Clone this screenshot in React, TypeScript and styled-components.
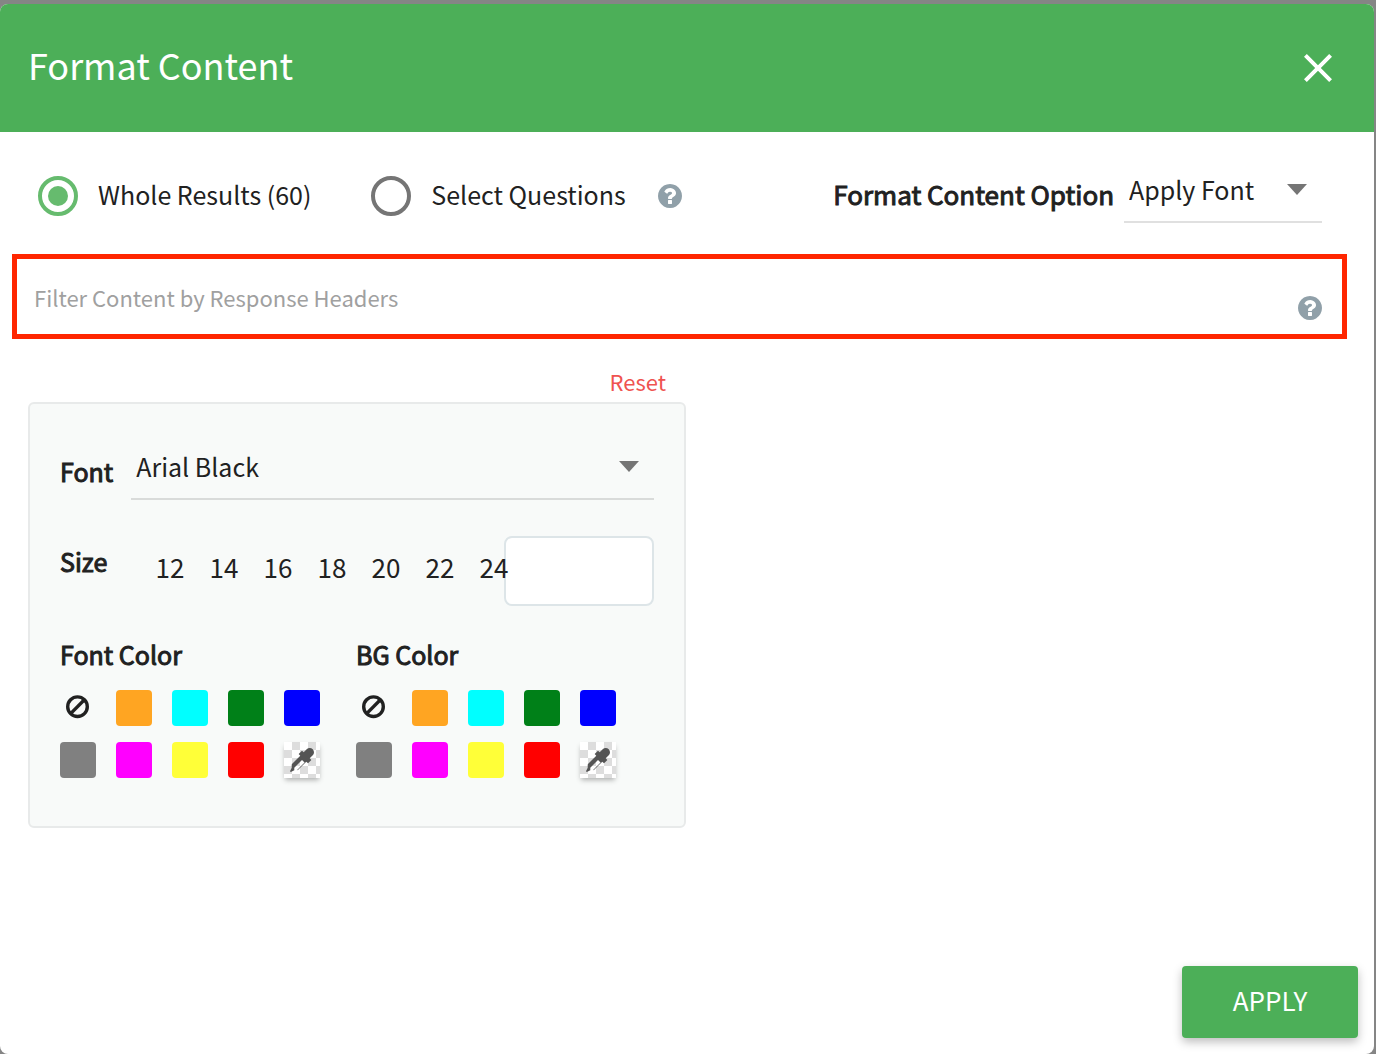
import React, { useState } from "react";
import styled, { createGlobalStyle } from "styled-components";
import { MdClose } from "react-icons/md";

const ink = "#212121";
const green = "#4caf58";

const GlobalStyle = createGlobalStyle`
  *, *::before, *::after { box-sizing: border-box; }
  body {
    margin: 0;
    background: #858585;
    color: ${ink};
    font: 25px/40px "Noto Sans CJK SC", "Noto Sans", sans-serif;
  }
  button, input, select { font: inherit; color: inherit; }
  button { padding: 0; border: 0; background: none; cursor: pointer; }
`;

const Backdrop = styled.div`
  min-height: 100vh;
  padding: 4px 2px 0 0;
  display: flex;
`;

const Dialog = styled.section`
  flex: 1;
  display: flex;
  flex-direction: column;
  overflow: hidden;
  background: #fff;
  border-radius: 8px;
`;

const Header = styled.header`
  display: flex;
  align-items: center;
  justify-content: space-between;
  height: 128px;
  padding: 0 32px 0 28px;
  background: ${green};
  color: #fff;
`;

const Title = styled.h1`
  margin: 0;
  padding-bottom: 8px;
  font-size: 36px;
  line-height: 56px;
  font-weight: 400;
`;

const CloseButton = styled.button`
  display: flex;
  font-size: 48px;
`;

const HelpButton = styled.button`
  display: flex;
  color: #90a0a9;
`;

const Toolbar = styled.div`
  display: flex;
  align-items: center;
  padding: 37px 52px 31px 38px;

  ${HelpButton} { margin-left: 32px; }
`;

const RadioLabel = styled.label`
  display: flex;
  align-items: center;
  gap: 20px;
  cursor: pointer;

  & + & { margin-left: 60px; }
`;

const RadioText = styled.span`
  padding-bottom: 4px;
`;

const Radio = styled.input`
  appearance: none;
  display: grid;
  place-items: center;
  width: 40px;
  height: 40px;
  margin: 0;
  border: 4px solid #757575;
  border-radius: 50%;

  &:checked { border-color: #66bb6e; }
  &:checked::before {
    content: "";
    width: 20px;
    height: 20px;
    border-radius: 50%;
    background: #66bb6e;
  }
`;

const StrongLabel = styled.label`
  padding-bottom: 4px;
  -webkit-text-stroke: 1px currentColor;
`;

const OptionField = styled.div`
  display: flex;
  align-items: center;
  gap: 10px;
  margin-left: auto;

  ${StrongLabel} { font-size: 26px; }
`;

const SelectBox = styled.div<{ $width?: string }>`
  display: flex;
  align-items: center;
  width: ${(p) => p.$width ?? "auto"};
  flex: ${(p) => (p.$width ? "none" : 1)};
  border-bottom: 2px solid rgba(0, 0, 0, 0.12);
  padding-bottom: 12px;

  svg {
    flex: none;
    margin: 0 15px 0 -35px;
    pointer-events: none;
  }
`;

const Select = styled.select`
  appearance: none;
  flex: 1;
  min-width: 0;
  height: 40px;
  padding: 0 34px 2px 5px;
  border: 0;
  background: none;
`;

const FilterBar = styled.div`
  display: flex;
  align-items: center;
  height: 85px;
  margin: 0 27px 0 12px;
  padding: 0 20px 0 17px;
  border: 5px solid #ff2600;

  ${HelpButton} { padding-top: 22px; }
`;

const FilterInput = styled.input`
  flex: 1;
  min-width: 0;
  padding: 0;
  border: 0;
  background: none;
  font-size: 22px;
  outline: 0;

  &::placeholder { color: #a0a0a0; opacity: 1; }
`;

const Settings = styled.div`
  width: 658px;
  max-width: calc(100% - 56px);
  margin: 26px 28px 0;
`;

const ResetButton = styled.button`
  display: block;
  margin: 0 20px 0 auto;
  padding-bottom: 5px;
  color: #ef5350;
  font-size: 22px;
  line-height: 32px;
`;

const Panel = styled.div`
  padding: 42px 30px 48px;
  border: 2px solid #e8eaea;
  border-radius: 6px;
  background: #f8faf9;
`;

const FontRow = styled.div`
  display: flex;
  align-items: center;
  gap: 18px;
`;

const SizeRow = styled.div`
  display: flex;
  align-items: center;
  margin-top: 36px;

  ${StrongLabel} { width: 83px; padding-bottom: 20px; }
`;

const SizeList = styled.div`
  position: relative;
  z-index: 1;
  display: flex;
  flex: 1 1 0;
  min-width: 0;
  padding-bottom: 8px;
  font-size: 26px;
`;

const SizeButton = styled.button`
  flex: 0 0 54px;
  text-align: center;
`;

const SizeInput = styled.input`
  width: 150px;
  height: 70px;
  padding: 0 16px;
  border: 2px solid #dde5e8;
  border-radius: 8px;
  background: #fff;
`;

const Palettes = styled.div`
  display: flex;
  gap: 36px;
  margin-top: 28px;
`;

const PaletteTitle = styled.h2`
  margin: 0 0 16px;
  font-size: 25px;
  line-height: 40px;
  font-weight: 400;
  -webkit-text-stroke: 1px currentColor;
`;

const SwatchGrid = styled.div`
  display: grid;
  grid-template-columns: repeat(5, 36px);
  gap: 16px 20px;
`;

const Swatch = styled.button<{ $color?: string }>`
  display: grid;
  place-items: center;
  width: 36px;
  height: 36px;
  border-radius: 4px;
  background: ${(p) => p.$color ?? "transparent"};
`;

const PickerSwatch = styled(Swatch)`
  border-radius: 0;
  background: repeating-conic-gradient(#ddd 0 25%, #fff 0 50%) 0 0 / 16px 16px;
  box-shadow: 0 3px 5px -1px rgba(0, 0, 0, 0.3);
  color: #545454;
`;

const Footer = styled.footer`
  display: flex;
  justify-content: flex-end;
  margin-top: auto;
  padding: 16px;
`;

const ApplyButton = styled.button`
  min-width: 176px;
  height: 72px;
  padding-bottom: 4px;
  border-radius: 4px;
  background: ${green};
  color: #fff;
  font-size: 26px;
  box-shadow: 0 4px 10px rgba(0, 0, 0, 0.26);
`;

const HelpIcon = () => (
  <svg width="24" height="24" viewBox="128 128 1536 1536" fill="currentColor" aria-hidden="true">
    <path d="M1024 1376v-192q0-14-9-23t-23-9h-192q-14 0-23 9t-9 23v192q0 14 9 23t23 9h192q14 0 23-9t9-23zm256-672q0-88-55.5-163t-138.5-116-170-41q-243 0-371 213-15 24 8 42l132 100q7 6 19 6 16 0 25-12 53-68 86-92 34-24 86-24 48 0 85.5 26t37.5 59q0 38-20 61t-68 45q-63 28-115.5 86.5t-52.5 125.5v36q0 14 9 23t23 9h192q14 0 23-9t9-23q0-19 21.5-49.5t54.5-49.5q32-18 49-28.5t46-35 44.5-48 28-60.5 12.5-81zm384 192q0 209-103 385.5t-279.5 279.5-385.5 103-385.5-103-279.5-279.5-103-385.5 103-385.5 279.5-279.5 385.5-103 385.5 103 279.5 279.5 103 385.5z" />
  </svg>
);

const Caret = () => (
  <svg width="20" height="11" viewBox="0 0 20 11" fill="#757575" aria-hidden="true">
    <path d="M0 0h20L10 11z" />
  </svg>
);

const NoneIcon = () => (
  <svg width="36" height="36" viewBox="0 0 36 36" fill="none" stroke={ink} strokeWidth="3.4" aria-hidden="true">
    <circle cx="17.5" cy="16.7" r="9.8" />
    <path d="M10.6 23.6 24.4 9.8" />
  </svg>
);

const DropperIcon = () => (
  <svg width="24" height="24" viewBox="0 0 1792 1792" fill="currentColor" aria-hidden="true">
    <path d="M1698 94q94 94 94 226.500t-94 225.500l-225 223 104 104q10 10 10 23t-10 23l-210 210q-10 10-23 10t-23-10l-105-105-603 603q-37 37-90 37h-203l-256 128-64-64 128-256v-203q0-53 37-90l603-603-105-105q-10-10-10-23t10-23l210-210q10-10 23-10t23 10l104 104 223-225q93-94 225.500-94t226.500 94zm-1186 1570l576-576-192-192-576 576v192h192z" />
  </svg>
);

const sizes = [12, 14, 16, 18, 20, 22, 24];

const colors = [
  ["Orange", "#ffa522"],
  ["Cyan", "#00ffff"],
  ["Green", "#008018"],
  ["Blue", "#0000ff"],
  ["Grey", "#808080"],
  ["Magenta", "#ff00ff"],
  ["Yellow", "#ffff38"],
  ["Red", "#ff0000"],
];

function Palette({ title }: { title: string }) {
  return (
    <div>
      <PaletteTitle>{title}</PaletteTitle>
      <SwatchGrid>
        <Swatch type="button" aria-label="No color"><NoneIcon /></Swatch>
        {colors.map(([name, value]) => (
          <Swatch key={name} type="button" aria-label={name} $color={value} />
        ))}
        <PickerSwatch type="button" aria-label="Pick a color"><DropperIcon /></PickerSwatch>
      </SwatchGrid>
    </div>
  );
}

export default function App() {
  const [scope, setScope] = useState("whole");
  const [size, setSize] = useState("");

  return (
    <Backdrop>
      <GlobalStyle />
      <Dialog role="dialog" aria-labelledby="dialog-title">
        <Header>
          <Title id="dialog-title">Format Content</Title>
          <CloseButton type="button" aria-label="Close"><MdClose /></CloseButton>
        </Header>

        <Toolbar>
          <RadioLabel>
            <Radio type="radio" name="scope" checked={scope === "whole"} onChange={() => setScope("whole")} />
            <RadioText>Whole Results (60)</RadioText>
          </RadioLabel>
          <RadioLabel>
            <Radio type="radio" name="scope" checked={scope === "select"} onChange={() => setScope("select")} />
            <RadioText>Select Questions</RadioText>
          </RadioLabel>
          <HelpButton type="button" aria-label="Help on question selection"><HelpIcon /></HelpButton>
          <OptionField>
            <StrongLabel htmlFor="format-option">Format Content Option</StrongLabel>
            <SelectBox $width="198px">
              <Select id="format-option"><option>Apply Font</option></Select>
              <Caret />
            </SelectBox>
          </OptionField>
        </Toolbar>

        <FilterBar>
          <FilterInput aria-label="Filter Content by Response Headers" placeholder="Filter Content by Response Headers" />
          <HelpButton type="button" aria-label="Help on filtering"><HelpIcon /></HelpButton>
        </FilterBar>

        <Settings>
          <ResetButton type="button">Reset</ResetButton>
          <Panel>
            <FontRow>
              <StrongLabel htmlFor="font-family">Font</StrongLabel>
              <SelectBox>
                <Select id="font-family"><option>Arial Black</option></Select>
                <Caret />
              </SelectBox>
            </FontRow>
            <SizeRow>
              <StrongLabel htmlFor="font-size">Size</StrongLabel>
              <SizeList>
                {sizes.map((n) => (
                  <SizeButton key={n} type="button" onClick={() => setSize(String(n))}>{n}</SizeButton>
                ))}
              </SizeList>
              <SizeInput id="font-size" value={size} onChange={(e) => setSize(e.target.value)} />
            </SizeRow>
            <Palettes>
              <Palette title="Font Color" />
              <Palette title="BG Color" />
            </Palettes>
          </Panel>
        </Settings>

        <Footer>
          <ApplyButton type="button">APPLY</ApplyButton>
        </Footer>
      </Dialog>
    </Backdrop>
  );
}
